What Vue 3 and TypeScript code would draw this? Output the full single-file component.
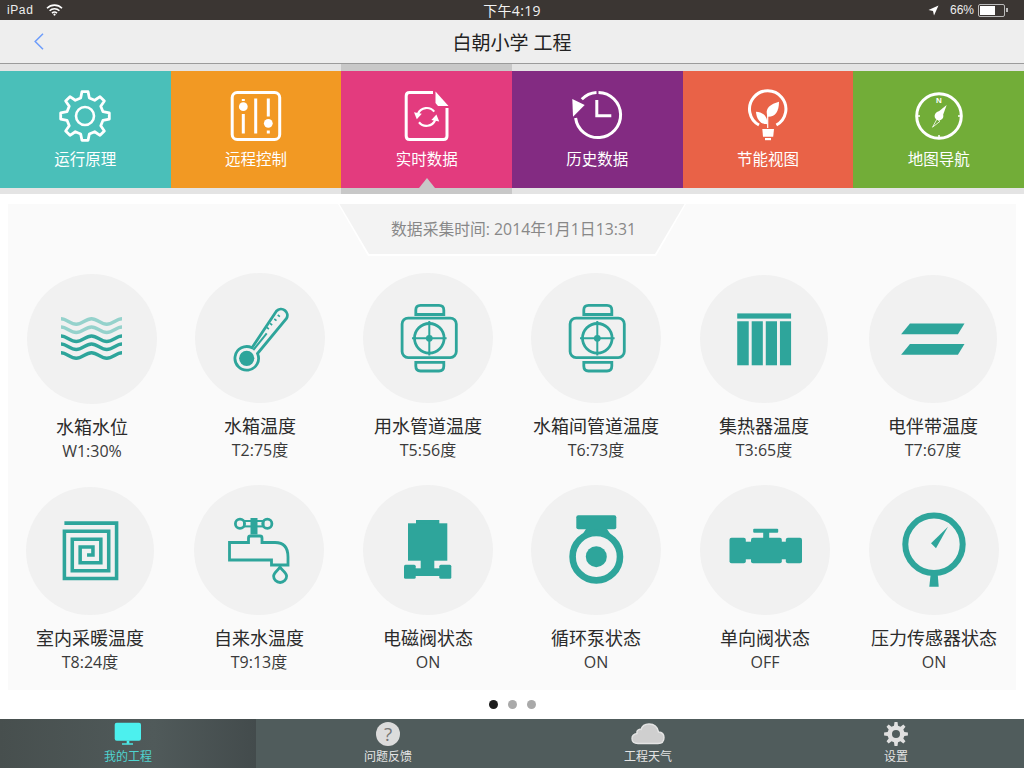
<template>
  <div class="screen">
    <div class="status-bar">
      <div class="status-left">
        <span>iPad</span>
        <svg class="wifi" width="17" height="12" viewBox="0 0 17 12">
          <path d="M1 4.2a10.6 10.6 0 0 1 15 0" />
          <path d="M3.6 6.8a7 7 0 0 1 9.8 0" />
          <path d="M6 9.2a3.6 3.6 0 0 1 5 0" />
          <circle cx="8.5" cy="10.6" r="1.1" fill="#fff" stroke="none" />
        </svg>
      </div>
      <div class="status-time">下午4:19</div>
      <div class="status-right">
        <svg width="11" height="11" viewBox="0 0 11 11"><polygon points="10.5,0.5 0.5,5 5,6 6,10.5" fill="#fff" /></svg>
        <span class="percent">66%</span>
        <div class="battery"><div class="battery-fill"></div></div>
        <div class="battery-nub"></div>
      </div>
    </div>

    <div class="nav-bar">
      <svg class="back" width="10" height="17" viewBox="0 0 10 17"><path d="M9 0.8 1.2 8.5 9 16.2" /></svg>
      <div class="nav-title">白朝小学 工程</div>
    </div>

    <div class="menu">
      <div v-for="tile in tiles" :key="tile.name" class="menu-col" :class="{ active: tile.active }">
        <div class="tile" :style="{ backgroundColor: tile.color }">
          <svg class="tile-icon" width="60" height="60" viewBox="0 0 60 60">
            <g v-if="tile.icon === 'gear'" fill="none" stroke="#fff">
              <path :d="tileGear" stroke-width="2.8" stroke-linejoin="round" />
              <circle cx="30" cy="30" r="9" stroke-width="2.6" />
            </g>
            <g v-else-if="tile.icon === 'sliders'" fill="none" stroke="#fff" stroke-width="3">
              <rect x="6.2" y="6.5" width="47.5" height="47" rx="5" />
              <path d="M17.3 13v2M17.3 28v19.5M29.7 12.5v35M42.3 12.5v18M42.3 44.5v3" />
              <circle cx="17.3" cy="20.7" r="4.4" fill="#fff" stroke="none" />
              <circle cx="42.3" cy="37.3" r="4.4" fill="#fff" stroke="none" />
            </g>
            <g v-else-if="tile.icon === 'file'">
              <path d="M36 6.5H12.5Q9.2 6.5 9.2 10V50Q9.2 53.5 12.5 53.5H46.5Q50 53.5 50 50V22" fill="none" stroke="#fff" stroke-width="3" />
              <polygon points="38.5,5.5 51.5,20 41,20 38.5,17" fill="#fff" />
              <path d="M21 27.7A9.5 9.5 0 0 1 37.2 25.7M38.2 34A9.5 9.5 0 0 1 22 36.2" fill="none" stroke="#fff" stroke-width="2.2" />
              <polygon points="17,26.2 24.8,27.8 19.8,33.2" fill="#fff" />
              <polygon points="42.2,35.6 34.4,34 39.4,28.6" fill="#fff" />
            </g>
            <g v-else-if="tile.icon === 'clock'">
              <path d="M8.6 32A22.6 22.6 0 1 0 31.5 6.4M29.5 6.45A22.6 22.6 0 0 0 14.8 13.2" fill="none" stroke="#fff" stroke-width="3" />
              <polygon points="5.3,13 17.7,19 6,30.7" fill="#fff" />
              <path d="M29.8 14V31.2M28.3 29.7H44.3" fill="none" stroke="#fff" stroke-width="3" />
            </g>
            <g v-else-if="tile.icon === 'bulb'">
              <path d="M21 39A18.2 18.2 0 1 1 38.4 39" fill="none" stroke="#fff" stroke-width="3" />
              <path d="M29.7 30.7C26 22 33 18 41 15.7 41 25 37.5 31 29.7 30.7Z" fill="#fff" />
              <path d="M18 25.7C24 25.7 30 30 29.3 38.3 22 38.3 18.5 33 18 25.7Z" fill="#fff" />
              <path d="M29.7 29V42" stroke="#fff" stroke-width="1.2" />
              <polygon points="24.3,43 36,43 35.2,50.7 25,50.7" fill="#fff" />
              <rect x="27" y="52" width="6" height="2.2" fill="#fff" />
            </g>
            <g v-else>
              <circle cx="30" cy="30" r="22.3" fill="none" stroke="#fff" stroke-width="3" />
              <path d="M8 30h3M49 30h3M30 49v3" stroke="#fff" stroke-width="1.5" />
              <text x="30" y="17" class="compass-n">N</text>
              <polygon points="37.7,19 26.5,28 32.5,33" fill="#fff" />
              <circle cx="30" cy="30" r="4.4" fill="#fff" />
              <polygon points="23.5,41.2 28,33 31,35.3" fill="none" stroke="#fff" stroke-width="0.8" />
            </g>
          </svg>
          <div class="tile-name">{{ tile.name }}</div>
          <div v-if="tile.active" class="tile-arrow"></div>
        </div>
      </div>
    </div>

    <div class="panel">
      <div class="stamp-edge">
        <div class="stamp">数据采集时间: 2014年1月1日13:31</div>
      </div>
      <div class="grid">
        <div v-for="item in sensors" :key="item.name" class="cell" :style="{ marginLeft: (item.dx || 0) * 2 + 'px', marginTop: (item.dy || 0) + 'px' }">
          <div class="disc" :class="{ small: item.small }">
            <svg width="100%" height="100%" viewBox="0 0 130 130">
              <g v-if="item.icon === 'water'" fill="none" stroke-width="3.4">
                <path v-for="(w, i) in waves" :key="i" :d="wavePath" :stroke="w.color" :transform="`translate(0 ${w.y})`" />
              </g>
              <g v-else-if="item.icon === 'thermo'" fill="none" stroke="#2ea59b" stroke-width="2.8">
                <path d="M81.5 38 57 74.8A11.8 11.8 0 1 0 62.5 80.5L91.5 45.5A6.3 6.3 0 0 0 81.5 38Z" />
                <circle cx="51.7" cy="85.3" r="7.6" fill="#2ea59b" stroke="none" />
                <path d="M58.3 77 71.7 60.3" stroke-width="2" />
                <path d="M71.7 54.3l2.2 1.7M75 50.3l2.2 1.7M79.3 46l2.2 1.7M82.7 42l2.2 1.7" stroke-width="1.6" />
              </g>
              <g v-else-if="item.icon === 'valve'" fill="none" stroke="#2ea59b" stroke-width="2.8">
                <rect x="39.1" y="45.1" width="54.2" height="39.5" rx="6" />
                <circle cx="66.3" cy="65.3" r="14.8" />
                <path d="M66.3 48v34.6M49 65.3h34.6" stroke-width="2" />
                <circle cx="66.3" cy="65.3" r="3.4" fill="#2ea59b" stroke="none" />
                <path d="M52.8 41.5V37Q52.8 32.4 57.5 32.4H76Q80.8 32.4 80.8 37V41.5Z" />
                <path d="M52.8 89.3V93Q52.8 98 57.5 98H76Q80.8 98 80.8 93V89.3Z" />
              </g>
              <g v-else-if="item.icon === 'collector'" fill="#2ea59b">
                <rect x="37.8" y="39" width="54.7" height="5.3" />
                <rect x="37.8" y="47" width="11.7" height="44.7" />
                <rect x="52.5" y="47" width="11.3" height="44.7" />
                <rect x="66.8" y="47" width="11.4" height="44.7" />
                <rect x="81.2" y="47" width="11.3" height="44.7" />
              </g>
              <g v-else-if="item.icon === 'heater'" fill="#2ea59b">
                <polygon points="32.6,60.3 41.6,49.3 97,49.3 90.3,60.3" />
                <polygon points="32.6,81 41.6,70 97,70 90.3,81" />
              </g>
              <path
                v-else-if="item.icon === 'floor'"
                d="M39 36.7H92V93H39V45H84V85H47V53H76V77H55V61H68V69H62"
                fill="none"
                stroke="#2ea59b"
                stroke-width="3.6"
              />
              <g v-else-if="item.icon === 'tap'" fill="none" stroke="#2ea59b" stroke-width="2.8">
                <circle cx="46" cy="38.7" r="4.6" />
                <circle cx="73.3" cy="38.7" r="4.6" />
                <rect x="50" y="36" width="19.5" height="5.4" stroke-width="2" />
                <rect x="56.5" y="33" width="7" height="16.5" fill="#2ea59b" stroke="none" />
                <path d="M54.5 57.5V53Q54.5 51 56.5 51H66Q68 51 68 53V57.5H81Q94 57.5 94 72V80H77.5V75H35.5V57.5Z" />
                <path d="M86 82C84 85.5 79.6 87.5 79.6 91A6.5 6.5 0 0 0 92.6 91C92.6 87.5 88 85.5 86 82Z" />
              </g>
              <g v-else-if="item.icon === 'solenoid'" fill="#2ea59b">
                <rect x="53" y="35" width="23.3" height="5" />
                <rect x="45" y="38.3" width="39.3" height="37.4" />
                <rect x="57.7" y="75" width="13.6" height="10" />
                <rect x="41" y="79.7" width="11.7" height="14" rx="1.5" />
                <rect x="76.3" y="79.7" width="12" height="14" rx="1.5" />
                <rect x="50" y="83.3" width="29" height="7.7" />
              </g>
              <g v-else-if="item.icon === 'pump'" fill="#2ea59b">
                <rect x="45.3" y="30.3" width="40" height="14" rx="2" />
                <polygon points="55,44 76,44 80,50 51,50" />
                <circle cx="65.3" cy="71.7" r="23.7" fill="none" stroke="#2ea59b" stroke-width="6.6" />
                <circle cx="65.3" cy="71.7" r="10.5" />
              </g>
              <g v-else-if="item.icon === 'check'" fill="#2ea59b">
                <rect x="29.5" y="52.7" width="16.3" height="25.6" rx="2" />
                <rect x="45" y="56.7" width="7" height="17.6" />
                <rect x="51" y="52.7" width="30.8" height="25.6" rx="2" />
                <rect x="81" y="56.7" width="5.5" height="17.6" />
                <rect x="85.8" y="52.7" width="16.2" height="25.6" rx="2" />
                <rect x="63.2" y="46.7" width="6" height="7" />
                <rect x="53.2" y="43.7" width="25" height="4" rx="1" />
              </g>
              <g v-else fill="#2ea59b">
                <circle cx="65" cy="59.3" r="28.7" fill="none" stroke="#2ea59b" stroke-width="6" />
                <polygon points="79,41.7 62,58.3 67,63.3" />
                <polygon points="61.7,89 68.7,89 69.7,101.7 60.3,101.7" />
              </g>
            </svg>
          </div>
          <div class="cell-name">{{ item.name }}</div>
          <div class="cell-value">{{ item.value }}</div>
        </div>
      </div>
    </div>

    <div class="pager">
      <span class="dot on"></span>
      <span class="dot"></span>
      <span class="dot"></span>
    </div>

    <div class="tab-bar">
      <div class="tab current">
        <svg width="32" height="24" viewBox="0 0 32 24">
          <rect x="2.7" y="0.7" width="26.3" height="18" rx="2" fill="#4cf0ee" />
          <rect x="14.7" y="18.7" width="2.6" height="3" fill="#4cf0ee" />
          <rect x="10" y="21.3" width="11" height="1.4" fill="#4cf0ee" />
        </svg>
        <div class="tab-name">我的工程</div>
      </div>
      <div class="tab second">
        <div class="help">?</div>
        <div class="tab-name">问题反馈</div>
      </div>
      <div class="tab third">
        <svg width="36" height="24" viewBox="0 0 36 24">
          <path d="M8 21.5H28Q34 21.5 34 15.5 34 10.5 28.5 10 27 2 19 2 12.5 2 11 7.5 9.5 6.5 7.5 8.5 6.5 10 7 11.5 2 12.5 2 16.5 2 21.5 8 21.5Z" fill="#cfcfcf" stroke="#e4e4e4" stroke-width="1.4" />
        </svg>
        <div class="tab-name">工程天气</div>
      </div>
      <div class="tab">
        <svg width="24" height="24" viewBox="0 0 24 24">
          <path :d="tabGear" fill="#e0e0e0" fill-rule="evenodd" />
        </svg>
        <div class="tab-name">设置</div>
      </div>
    </div>
  </div>
</template>

<script setup lang="ts">
interface Sensor {
  name: string
  value: string
  icon: string
  small?: boolean
  dx?: number
  dy?: number
}

const tiles = [
  { name: '运行原理', icon: 'gear', color: '#4abfb9' },
  { name: '远程控制', icon: 'sliders', color: '#f29923' },
  { name: '实时数据', icon: 'file', color: '#e33b7e', active: true },
  { name: '历史数据', icon: 'clock', color: '#832b82' },
  { name: '节能视图', icon: 'bulb', color: '#e96247' },
  { name: '地图导航', icon: 'compass', color: '#72ad38' },
]

const sensors: Sensor[] = [
  { name: '水箱水位', value: 'W1:30%', icon: 'water', dy: 1 },
  { name: '水箱温度', value: 'T2:75度', icon: 'thermo' },
  { name: '用水管道温度', value: 'T5:56度', icon: 'valve' },
  { name: '水箱间管道温度', value: 'T6:73度', icon: 'valve' },
  { name: '集热器温度', value: 'T3:65度', icon: 'collector', small: true },
  { name: '电伴带温度', value: 'T7:67度', icon: 'heater', small: true, dx: 1 },
  { name: '室内采暖温度', value: 'T8:24度', icon: 'floor', small: true, dx: -2 },
  { name: '自来水温度', value: 'T9:13度', icon: 'tap', dx: -1 },
  { name: '电磁阀状态', value: 'ON', icon: 'solenoid' },
  { name: '循环泵状态', value: 'ON', icon: 'pump' },
  { name: '单向阀状态', value: 'OFF', icon: 'check', dx: 1 },
  { name: '压力传感器状态', value: 'ON', icon: 'gauge', dx: 2 },
]

const wavePath = 'M34 0C39.5 0 43.5 5.5 49.25 5.5S58.75 0 64.5 0 74 5.5 79.75 5.5 89.5 0 95 0'
const waves = [
  { y: 44.7, color: '#95d2cc' },
  { y: 53, color: '#95d2cc' },
  { y: 62, color: '#2ea59b' },
  { y: 70, color: '#2ea59b' },
  { y: 78.7, color: '#2ea59b' },
]

// contorno de engrenagem com n dentes, hole > 0 abre o furo do meio
const gearPath = (c: number, outer: number, root: number, n: number, hole = 0) => {
  const step = (Math.PI * 2) / n
  const pts: string[] = []
  for (let i = 0; i < n; i++) {
    const a = i * step - Math.PI / 2
    const corners: [number, number][] = [
      [a - step * 0.3, root],
      [a - step * 0.16, outer],
      [a + step * 0.16, outer],
      [a + step * 0.3, root],
    ]
    for (const [ang, r] of corners) {
      pts.push(`${(c + Math.cos(ang) * r).toFixed(2)} ${(c + Math.sin(ang) * r).toFixed(2)}`)
    }
  }
  let d = 'M' + pts.join('L') + 'Z'
  if (hole) {
    d += `M${c - hole} ${c}a${hole} ${hole} 0 1 0 ${hole * 2} 0a${hole} ${hole} 0 1 0 ${-hole * 2} 0Z`
  }
  return d
}

const tileGear = gearPath(30, 24.5, 18.5, 8)
const tabGear = gearPath(12, 12, 8.6, 8, 4)
</script>

<style>
html,
body {
  margin: 0;
  background: #fff;
}
</style>

<style scoped>
.screen {
  width: 1024px;
  height: 768px;
  display: flex;
  flex-direction: column;
  overflow: hidden;
  background: #fff;
  font-family: "Open Sans", "Noto Sans CJK SC", sans-serif;
}

.status-bar {
  height: 20px;
  display: grid;
  grid-template-columns: 1fr auto 1fr;
  align-items: center;
  background: #3b3633;
  color: #eee;
  font-size: 12px;
}

.status-left {
  display: flex;
  align-items: center;
  padding-left: 7px;
  letter-spacing: 0.6px;
  font-family: "Liberation Sans", sans-serif;
}

.wifi {
  margin-left: 13px;
}

.wifi path {
  fill: none;
  stroke: #fff;
  stroke-width: 1.6;
}

.status-time {
  font-size: 14px;
  color: #f2f2f2;
  letter-spacing: 0.3px;
}

.status-right {
  display: flex;
  align-items: center;
  justify-content: flex-end;
  padding-right: 16px;
  font-family: "Liberation Sans", sans-serif;
}

.percent {
  margin-left: 11px;
}

.battery {
  width: 23px;
  height: 9px;
  margin-left: 4px;
  padding: 1px;
  border: 1px solid #bbb;
  border-radius: 2px;
}

.battery-fill {
  width: 15px;
  height: 100%;
  background: #fff;
}

.battery-nub {
  width: 2px;
  height: 4px;
  margin-left: 1px;
  background: #bbb;
}

.nav-bar {
  height: 43px;
  display: flex;
  align-items: center;
  justify-content: center;
  border-bottom: 1px solid #9b9b9b;
  background: #eee;
  position: relative;
}

.back {
  position: absolute;
  left: 34px;
  top: 13px;
}

.back path {
  fill: none;
  stroke: #6d9dfb;
  stroke-width: 1.5;
}

.nav-title {
  font-size: 19px;
  color: #222;
}

.menu {
  display: flex;
}

.menu-col {
  flex: 1;
  padding: 7px 0 6px;
  background: #e4e4e4;
}

.menu-col.active {
  background: #c8c8c8;
}

.tile {
  height: 117px;
  display: flex;
  flex-direction: column;
  align-items: center;
  box-sizing: border-box;
  padding-top: 15px;
  position: relative;
  color: #fff;
}

.tile-icon {
  display: block;
}

.tile-name {
  margin-top: 1px;
  font-size: 15.5px;
  line-height: 24px;
}

.tile-arrow {
  position: absolute;
  left: 50%;
  bottom: 0;
  margin-left: -8px;
  border-left: 8px solid transparent;
  border-right: 8px solid transparent;
  border-bottom: 10px solid #c8c8c8;
}

.compass-n {
  font-size: 8px;
  font-weight: 700;
  fill: #fff;
  text-anchor: middle;
  font-family: "Liberation Sans", sans-serif;
}

.panel {
  margin: 10px 8px 0;
  height: 486px;
  background: #fafafa;
}

.stamp-edge {
  width: 348px;
  height: 52px;
  margin: 0 auto;
  background: #fff;
  clip-path: polygon(0 0, 100% 0, 318px 100%, 30px 100%);
}

.stamp {
  height: 50px;
  line-height: 50px;
  padding-left: 3px;
  box-sizing: border-box;
  text-align: center;
  font-size: 15.8px;
  color: #888;
  background: #f3f3f3;
  clip-path: polygon(1.5px 0, 346.5px 0, 317px 100%, 31px 100%);
}

.grid {
  display: grid;
  grid-template-columns: repeat(6, 168px);
  grid-auto-rows: 189px;
  row-gap: 23px;
  justify-items: center;
  align-items: start;
  margin-top: 17px;
}

.cell {
  width: 130px;
  display: flex;
  flex-direction: column;
  align-items: center;
  text-align: center;
  white-space: nowrap;
}

.disc {
  width: 130px;
  height: 130px;
  border-radius: 50%;
  background: #f1f1f1;
}

.disc.small {
  width: 128px;
  height: 128px;
  margin: 2px 1px 0;
}

.disc svg {
  display: block;
}

.cell-name {
  margin-top: 11px;
  font-size: 18px;
  line-height: 24px;
  color: #2b2b2b;
}

.cell-value {
  font-size: 16px;
  line-height: 24px;
  color: #3a3a3a;
}

.pager {
  height: 29px;
  display: flex;
  align-items: center;
  justify-content: center;
  gap: 10px;
}

.dot {
  width: 9px;
  height: 9px;
  border-radius: 50%;
  background: #a9a9a9;
}

.dot.on {
  background: #1c1c1c;
}

.tab-bar {
  height: 49px;
  display: flex;
  background: #505c5c;
}

.tab {
  flex: 0 0 256px;
  display: flex;
  flex-direction: column;
  align-items: center;
  box-sizing: border-box;
  padding-top: 3px;
  color: #e4e4e4;
}

.tab svg {
  display: block;
}

.tab.current {
  color: #4fd4d0;
  background: linear-gradient(to right, #474f4e, #505a5a 60%, #434b4c);
}

.tab.second {
  padding-left: 8px;
}

.tab.third {
  padding-left: 16px;
}

.tab-name {
  margin-top: 3px;
  font-size: 12px;
  line-height: 16px;
}

.help {
  width: 24px;
  height: 24px;
  border-radius: 50%;
  background: #dcdcdc;
  color: #777;
  font-size: 19px;
  line-height: 24px;
  text-align: center;
}
</style>
